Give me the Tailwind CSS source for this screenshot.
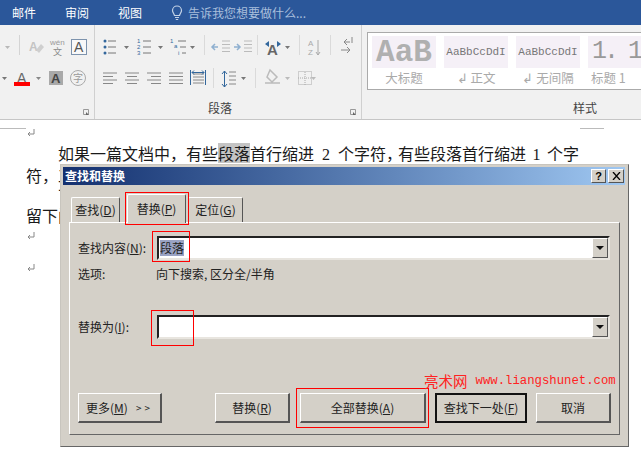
<!DOCTYPE html>
<html lang="zh">
<head>
<meta charset="utf-8">
<script src="https://cdn.jsdelivr.net/npm/@tailwindcss/browser@4"></script>
</head>
<body class="m-0 bg-white">
<div class="relative w-[641px] h-[465px] overflow-hidden bg-white font-['Noto_Sans_CJK_SC','Liberation_Sans',sans-serif] text-[12px] text-[#222]">

  <!-- title tabs -->
  <div class="flex items-center h-[25px] bg-[#2b579a] text-white pl-[12px] leading-none">
    <span class="w-[53px]">邮件</span>
    <span class="w-[53px]">审阅</span>
    <span class="w-[53px]">视图</span>
    <svg class="w-[12px] h-[16px]" viewBox="0 0 12 16" fill="none" stroke="#c3d2e6" stroke-width="1.2"><path d="M3.5 10.5C3 8.5 1.5 7.5 1.5 5.5a4.5 4.5 0 0 1 9 0c0 2-1.5 3-2 5zM4 12.5h4M4.8 14.5h2.4"/></svg>
    <span class="ml-[5px] text-[#a9bfdc]">告诉我您想要做什么...</span>
  </div>

  <!-- ribbon -->
  <div class="flex h-[95px] bg-[#f1f1f1] border-b border-[#c6c6c6]">
    <!-- font group tail -->
    <div class="relative w-[95px] shrink-0 border-r border-[#d0d0d0]">
      <svg class="block" width="94" height="94" viewBox="0 25 94 94" fill="none">
        <path d="M5 46h5l-2.500 3z" fill="#b8b8b8"/>
        <path d="M19.500 35v20" stroke="#d4d4d4"/>
        <text x="29" y="51" font-family="Liberation Sans" font-size="12" font-weight="bold" fill="#c4c4c4">A</text>
        <path d="M36 50l5-6 3 3-5 6z" fill="#cfcfcf"/>
        <text x="50" y="45" font-family="Liberation Sans" font-size="8" fill="#9a9a9a">wén</text>
        <text x="53" y="55" font-family="Noto Sans CJK SC" font-size="9" fill="#8a8a8a">文</text>
        <rect x="71.500" y="39.500" width="15" height="15" stroke="#7d93ad" fill="#f8f8f8"/>
        <text x="74" y="52" font-family="Liberation Sans" font-size="14" fill="#555">A</text>
        <path d="M2 77h5l-2.500 3z" fill="#777"/>
        <text x="17" y="83" font-family="Liberation Sans" font-size="14" fill="#666">A</text>
        <rect x="14" y="82" width="16" height="4" fill="#f00"/>
        <path d="M36 77h5l-2.500 3z" fill="#888"/>
        <rect x="49" y="71" width="14" height="14" fill="#a9a9a9"/>
        <text x="51" y="83" font-family="Liberation Sans" font-size="13" font-weight="bold" fill="#444">A</text>
        <circle cx="78" cy="78" r="7.500" stroke="#aaa"/>
        <text x="73" y="82" font-family="Noto Sans CJK SC" font-size="10" fill="#999">字</text>
        <path d="M83.500 109.500h5v5h-5z" stroke="#999"/>
        <path d="M86 112l3 3h-3z" fill="#666"/>
      </svg>
    </div>

    <!-- paragraph group -->
    <div class="relative w-[267px] shrink-0 border-r border-[#d0d0d0]">
      <svg class="block" width="266" height="94" viewBox="95 25 266 94" fill="none" stroke-width="1">
        <g stroke="#777">
          <path d="M108 41h8M108 47h8M108 53h8M143 41h8M143 47h8M143 53h8M178 41h8M180 47h6M182 53h4"/>
          <path d="M222 41h8M222 44.500h8M222 48h8M222 51.500h8M244 41h8M244 44.500h8M244 48h8M244 51.500h8" stroke="#bbb"/>
        </g>
        <g fill="#33679c"><circle cx="105" cy="41" r="1.500"/><circle cx="105" cy="47" r="1.500"/><circle cx="105" cy="53" r="1.500"/></g>
        <g font-family="Liberation Sans" font-size="6" fill="#33679c"><text x="137" y="43">1</text><text x="137" y="49">2</text><text x="137" y="55">3</text><text x="170" y="43">1</text><text x="174" y="48">a</text><text x="178" y="55">i</text></g>
        <g fill="#777"><path d="M124 46h5l-2.500 3zM158 46h5l-2.500 3zM190 46h5l-2.500 3zM285 46h5l-2.500 3zM241 77h5l-2.500 3z"/></g>
        <g stroke="#dadada"><path d="M204.500 35v20M257.500 35v20M299.500 35v20M213.500 68v20M255.500 68v20"/></g>
        <path d="M218 47h-6m3-3l-3 3 3 3M234 47h6m-3-3l3 3-3 3" stroke="#8fb0d0" stroke-width="1.500"/>
        <text x="267" y="55" font-family="Liberation Sans" font-size="15" font-weight="bold" fill="#666">A</text>
        <path d="M265 44l4-3v6zM281 44l-4-3v6z" fill="#33679c"/>
        <text x="308" y="46" font-family="Liberation Sans" font-size="8" fill="#aaa">A</text>
        <text x="308" y="55" font-family="Liberation Sans" font-size="8" fill="#aaa">Z</text>
        <path d="M318 40v15m-2-3l2 3 2-3" stroke="#aaa"/>
        <g stroke="#888">
          <path d="M103 73h14M103 76.500h10M103 80h14M103 83.500h10"/>
          <path d="M125 73h14M127 76.500h10M125 80h14M127 83.500h10"/>
          <path d="M147 73h14M151 76.500h10M147 80h14M151 83.500h10"/>
          <path d="M169 73h14M169 76.500h14M169 80h14M169 83.500h14"/>
          <path d="M193 74h11M193 77h11M193 80h11M193 83h11"/>
          <path d="M229 72h7M229 76h7M229 80h7M229 84h7"/>
        </g>
        <path d="M190.500 70v15M205.500 70v15M192 72.500h12m-10-2l-2 2 2 2m8-4l2 2-2 2" stroke="#33679c"/>
        <path d="M224.500 71v16m-2.500-13l2.500-3 2.500 3m-5 10l2.500 3 2.500-3" stroke="#33679c"/>
        <path d="M270 70l7 7-5 5-5-5zM265 83h15" stroke="#bbb" stroke-width="1.500"/>
        <path d="M285 77h5l-2.500 3zM311 77h5l-2.500 3z" fill="#bbb"/>
        <rect x="298.500" y="71.500" width="13" height="13" stroke="#aaa" stroke-dasharray="1 1"/>
        <path d="M305 72v13M298 78h13" stroke="#aaa" stroke-dasharray="1 1"/>
        <path d="M330.500 35v20" stroke="#dadada"/>
        <path d="M341 50h9m-3-3l3 3-3 3M350 42h-6m3-3l-3 3 3 3M352 37v6" stroke="#888"/>
        <path d="M350.500 109.500h5v5h-5z" stroke="#999"/>
        <path d="M353 112l3 3h-3z" fill="#666"/>
      </svg>
      <span class="absolute left-[113px] top-[74px] text-[#444] leading-[18px]">段落</span>
    </div>

    <!-- styles group -->
    <div class="relative flex-1 overflow-hidden pl-[5px] pt-[7px]">
      <div class="flex gap-[8px] w-[290px] h-[58px] border border-[#aaa] bg-white pl-[4px] pt-[3px] text-[#aaa] text-[12.5px]">
        <div class="flex flex-col items-center w-[64px]">
          <div class="flex items-center justify-center w-full h-[32px] bg-[#f5f0f7] font-['Liberation_Mono',monospace] text-[31px] leading-none font-bold text-[#b0b0b0]">AaB</div>
          <span class="mt-[1px] leading-[18px]">大标题</span>
        </div>
        <div class="flex flex-col items-center w-[64px]">
          <div class="flex items-center justify-center w-full h-[32px] bg-[#f5f0f7] font-['Liberation_Mono',monospace] text-[11px] text-[#777] whitespace-nowrap">AaBbCcDdI</div>
          <span class="mt-[1px] leading-[18px]">↲ 正文</span>
        </div>
        <div class="flex flex-col items-center w-[64px]">
          <div class="flex items-center justify-center w-full h-[32px] bg-[#f5f0f7] font-['Liberation_Mono',monospace] text-[11px] text-[#777] whitespace-nowrap">AaBbCcDdI</div>
          <span class="mt-[1px] leading-[18px]">↲ 无间隔</span>
        </div>
        <div class="flex flex-col items-center w-[64px]">
          <div class="flex items-center w-full h-[32px] pl-[4px] bg-[#f5f0f7] font-['Liberation_Mono',monospace] text-[25px] tracking-[-3px] text-[#999] whitespace-nowrap">1. 1</div>
          <span class="mt-[1px] leading-[18px] self-start ml-[3px] whitespace-nowrap">标题 1</span>
        </div>
      </div>
      <span class="absolute left-[211px] top-[74px] text-[#444] leading-[18px]">样式</span>
    </div>
  </div>

  <!-- document -->
  <div class="relative pl-[26px] text-[16px] text-[#1a1a1a] leading-[20px]">
    <div class="absolute left-0 top-0 w-[26px] h-px bg-[#bbb]"></div>
    <div class="absolute left-[580px] top-0 w-[24px] h-px bg-[#bbb]"></div>
    <svg class="block mt-[8px]" width="10" height="10" viewBox="0 0 10 10" fill="none" stroke="#888"><path d="M8 1v5H2m2-2L2 6l2 2"/></svg>
    <div class="h-[22px] mt-[5px] pl-[32px] whitespace-nowrap">如果一篇文档中，有些<span class="inline-block bg-[#c4c4c4]">段落</span>首行缩进<span class="inline-block w-[24px] text-center font-['Liberation_Serif',serif] text-[16px]">2</span>个字符<span class="inline-block w-[12px]">，</span>有些段落首行缩进<span class="inline-block w-[21px] text-center font-['Liberation_Serif',serif] text-[16px]">1</span>个字</div>
    <div class="h-[20px] whitespace-nowrap">符，工</div>
    <div class="h-[20px] pl-[32px] whitespace-nowrap">丁</div>
    <div class="h-[20px] whitespace-nowrap">留下门</div>
    <svg class="block mt-[6px]" width="10" height="10" viewBox="0 0 10 10" fill="none" stroke="#888"><path d="M8 1v5H2m2-2L2 6l2 2"/></svg>
    <svg class="block mt-[22px]" width="10" height="10" viewBox="0 0 10 10" fill="none" stroke="#888"><path d="M8 1v5H2m2-2L2 6l2 2"/></svg>
  </div>

  <!-- dialog -->
  <div class="absolute left-[60px] top-[164px] w-[569px] h-[283px] bg-[#d4d0c8] border border-[#c8c5be] border-r-[#666] border-b-[#666] p-[2px] text-[#222]">
    <div class="flex items-center justify-between h-[18px] w-[562px] bg-gradient-to-r from-[#14306f] to-[#a0c8f2] pl-[2px] pr-px">
      <span class="text-white font-bold leading-none">查找和替换</span>
      <div class="flex gap-[2px]">
        <div class="flex items-center justify-center w-[15px] h-[14px] bg-[#d4d0c8] border border-white border-r-[#555] border-b-[#555] font-['Liberation_Sans',sans-serif] font-bold text-[11px] leading-none text-black">?</div>
        <div class="flex items-center justify-center w-[16px] h-[14px] bg-[#d4d0c8] border border-white border-r-[#555] border-b-[#555]">
          <svg width="9" height="8" viewBox="0 0 9 8" stroke="#000" stroke-width="1.300"><path d="M1 0l7 8M8 0L1 8"/></svg>
        </div>
      </div>
    </div>

    <!-- tabs -->
    <div class="flex items-end h-[37px] pl-[8px]">
      <div class="flex items-center justify-center w-[49px] h-[25px] mb-0 bg-[#d4d0c8] border border-white border-b-0 border-r-[#555] rounded-t-[2px]">查找(<span class="underline">D</span>)</div>
      <div class="relative z-10 flex items-center justify-center w-[59px] h-[29px] -mb-px ml-[7px] bg-[#d4d0c8] border border-white border-b-0 border-r-[#555] rounded-t-[2px]">替换(<span class="underline">P</span>)</div>
      <div class="flex items-center justify-center w-[55px] h-[25px] ml-[2px] bg-[#d4d0c8] border border-white border-b-0 border-r-[#555] rounded-t-[2px]">定位(<span class="underline">G</span>)</div>
    </div>

    <!-- panel -->
    <div class="ml-[6px] w-[551px] h-[213px] border border-white border-r-[#666] border-b-[#666] pl-[8px] pt-[13px]">
      <div class="flex items-center h-[24px]">
        <span class="w-[79px]">查找内容(<span class="underline">N</span>):</span>
        <div class="flex items-center justify-between w-[453px] h-[24px] bg-white border-2 border-[#222] border-r-[#e8e5df] border-b-[#e8e5df] pl-[1px] pr-0">
          <span class="inline-block h-[16px] bg-[#9aa3c4] leading-[16px] text-[#222]">段落</span>
          <div class="flex items-center justify-center w-[16px] h-[20px] bg-[#d4d0c8] border border-white border-r-[#555] border-b-[#555]">
            <svg width="8" height="4" viewBox="0 0 8 4"><path d="M0 0h8L4 4z" fill="#111"/></svg>
          </div>
        </div>
      </div>
      <div class="flex items-center h-[16px] mt-[6px]">
        <span class="w-[78px]">选项:</span>
        <span>向下搜索, 区分全/半角</span>
      </div>
      <div class="flex items-center h-[24px] mt-[33px]">
        <span class="w-[79px]">替换为(<span class="underline">I</span>):</span>
        <div class="flex items-center justify-end w-[453px] h-[24px] bg-white border-2 border-[#222] border-r-[#e8e5df] border-b-[#e8e5df]">
          <div class="flex items-center justify-center w-[16px] h-[20px] bg-[#d4d0c8] border border-white border-r-[#555] border-b-[#555]">
            <svg width="8" height="4" viewBox="0 0 8 4"><path d="M0 0h8L4 4z" fill="#111"/></svg>
          </div>
        </div>
      </div>
      <div class="flex h-[30px] mt-[54px]">
        <div class="flex items-center justify-center w-[84px] border border-white border-r-[#555] border-b-[#555] border-b-2 border-r-2">更多(<span class="underline">M</span>)<span class="ml-[8px] tracking-[3px] text-[10px]">&gt;&gt;</span></div>
        <div class="flex items-center justify-center w-[75px] ml-[53px] border border-white border-r-[#555] border-b-[#555] border-b-2 border-r-2">替换(<span class="underline">R</span>)</div>
        <div class="flex items-center justify-center w-[126px] ml-[10px] border border-white border-r-[#555] border-b-[#555] border-b-2 border-r-2">全部替换(<span class="underline">A</span>)</div>
        <div class="flex items-center justify-center w-[92px] ml-[9px] border-2 border-[#111]">查找下一处(<span class="underline">F</span>)</div>
        <div class="flex items-center justify-center w-[75px] ml-[9px] border border-white border-r-[#555] border-b-[#555] border-b-2 border-r-2">取消</div>
      </div>
    </div>
  </div>

  <!-- red annotations -->
  <div class="absolute left-[125px] top-[192px] w-[64px] h-[33px] border border-[#f00]"></div>
  <div class="absolute left-[152px] top-[231px] w-[38px] h-[31px] border border-[#f00]"></div>
  <div class="absolute left-[151px] top-[310px] w-[43px] h-[36px] border border-[#f00]"></div>
  <div class="absolute left-[296px] top-[388px] w-[133px] h-[40px] border border-[#f00]"></div>
  <div class="absolute left-[424px] top-[372px] flex items-center gap-[8px] h-[18px] text-[#f22] whitespace-nowrap">
    <span class="text-[14.5px] leading-none">亮术网</span>
    <span class="font-['Liberation_Mono',monospace] text-[12.3px] leading-none">www.liangshunet.com</span>
  </div>
</div>
</body>
</html>
